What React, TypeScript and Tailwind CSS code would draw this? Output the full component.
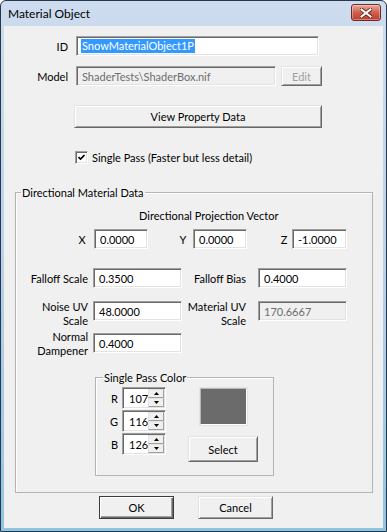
import React from "react";

function Sunken({
  className = "",
  children,
}: {
  className?: string;
  children?: React.ReactNode;
}) {
  return (
    <div
      className={
        "border border-t-[#a0a0a0] border-l-[#a0a0a0] border-b-white border-r-white shadow-[inset_1px_1px_0_#696969,inset_-1px_-1px_0_#e3e3e3] " +
        className
      }
    >
      {children}
    </div>
  );
}

function TextBox({
  value,
  w,
  disabled = false,
}: {
  value: string;
  w: string;
  disabled?: boolean;
}) {
  return (
    <Sunken
      className={
        w +
        " h-[20px] flex items-center pl-[5px] " +
        (disabled ? "bg-[#f0f0f0] text-[#6d6d6d]" : "bg-white text-black")
      }
    >
      {value}
    </Sunken>
  );
}

function Btn({
  label,
  className = "",
  disabled = false,
  isDefault = false,
}: {
  label: string;
  className?: string;
  disabled?: boolean;
  isDefault?: boolean;
}) {
  return (
    <div
      className={
        "flex items-center justify-center bg-[#f0f0f0] border " +
        (isDefault
          ? "border-[#3c3c3c] shadow-[inset_1px_1px_0_#ffffff,inset_-1px_-1px_0_#696969,inset_-2px_-2px_0_#a0a0a0] "
          : "border-t-[#e3e3e3] border-l-[#e3e3e3] border-b-[#696969] border-r-[#696969] shadow-[inset_1px_1px_0_#ffffff,inset_-1px_-1px_0_#a0a0a0] ") +
        (disabled ? "text-[#a0a0a0] " : "text-black ") +
        className
      }
    >
      {label}
    </div>
  );
}

function Spin({ v }: { v: string }) {
  return (
    <Sunken className="w-[44px] h-[22px] bg-white flex">
      <div className="flex-1 flex items-center pl-[6px]">{v}</div>
      <div className="w-[17px] flex flex-col py-[1px] pr-[1px]">
        <div className="flex-1 flex items-center justify-center bg-[#f0f0f0] border border-t-[#e3e3e3] border-l-[#e3e3e3] border-b-[#a0a0a0] border-r-[#a0a0a0]">
          <svg width="5" height="3" viewBox="0 0 5 3">
            <path d="M2.5 0 L5 3 L0 3 Z" fill="#000" />
          </svg>
        </div>
        <div className="flex-1 flex items-center justify-center bg-[#f0f0f0] border border-t-[#e3e3e3] border-l-[#e3e3e3] border-b-[#a0a0a0] border-r-[#a0a0a0]">
          <svg width="5" height="3" viewBox="0 0 5 3">
            <path d="M0 0 L5 0 L2.5 3 Z" fill="#000" />
          </svg>
        </div>
      </div>
    </Sunken>
  );
}

export default function App() {
  return (
    <div className="w-[387px] h-[532px] font-['Lato','Liberation_Sans',Arial,sans-serif] text-[11px] leading-[13px] text-black">
      <div className="w-full h-full flex flex-col border border-[#28384c] rounded-t-[6px] bg-gradient-to-b from-[#cddcee] via-[#b9d1ea] to-[#8fc4e0] px-[3px] pb-[3px]">
        {/* Title bar */}
        <div className="h-[25px] flex items-center justify-between pl-[4px] pr-[2px]">
          <span className="text-[12px] leading-[15px] text-black">Material Object</span>
          <div className="w-[30px] h-[17px] -mt-[2px] rounded-[3px] border border-[#6e2a22] bg-gradient-to-b from-[#e6a89a] via-[#d0604e] to-[#c0392b] shadow-[inset_0_0_0_1px_rgba(255,255,255,0.35)] flex items-center justify-center">
            <svg width="12" height="10" viewBox="0 0 12 10">
              <path
                d="M1.5 1.5 L10.5 8.5 M10.5 1.5 L1.5 8.5"
                stroke="#5a1e16"
                strokeWidth="3.6"
                strokeLinecap="square"
              />
              <path
                d="M1.5 1.5 L10.5 8.5 M10.5 1.5 L1.5 8.5"
                stroke="#ffffff"
                strokeWidth="2"
                strokeLinecap="square"
              />
            </svg>
          </div>
        </div>

        {/* Client area */}
        <div className="flex-1 bg-[#f0f0f0] flex flex-col">
          {/* ID */}
          <div className="mt-[10px] flex items-center">
            <div className="w-[64px] text-right">ID</div>
            <Sunken className="ml-[8px] w-[243px] h-[20px] bg-white flex items-center pl-[4px]">
              <span className="bg-[#3399ff] text-white px-[1px] leading-[14px]">
                SnowMaterialObject1P
              </span>
            </Sunken>
          </div>

          {/* Model */}
          <div className="mt-[10px] flex items-center">
            <div className="w-[64px] text-right">Model</div>
            <div className="ml-[8px]">
              <TextBox value="ShaderTests\ShaderBox.nif" w="w-[200px]" disabled />
            </div>
            <Btn label="Edit" disabled className="ml-[5px] w-[41px] h-[20px]" />
          </div>

          {/* View Property Data */}
          <div className="mt-[19px] flex">
            <Btn label="View Property Data" className="ml-[70px] w-[248px] h-[23px]" />
          </div>

          {/* Checkbox */}
          <div className="mt-[23px] flex items-center h-[13px]">
            <Sunken className="ml-[71px] w-[13px] h-[13px] bg-white flex items-center justify-center">
              <svg width="7" height="7" viewBox="0 0 7 7">
                <path d="M0.5 3 L2.5 5 L6.5 1" stroke="#000" strokeWidth="1.6" fill="none" />
              </svg>
            </Sunken>
            <span className="ml-[4px]">Single Pass (Faster but less detail)</span>
          </div>

          {/* Directional Material Data group */}
          <fieldset className="mt-[22px] ml-[11px] w-[358px] h-[307px] border border-[#b4b4b4] shadow-[inset_1px_1px_0_#ffffff]">
            <legend className="ml-[5px] px-[1px]">Directional Material Data</legend>

            <div className="mt-[10px] pl-[123px]">Directional Projection Vector</div>

            {/* XYZ */}
            <div className="mt-[7px] flex items-center">
              <div className="ml-[62px] w-[8px] text-center">X</div>
              <div className="ml-[8px]">
                <TextBox value="0.0000" w="w-[54px]" />
              </div>
              <div className="ml-[31px] w-[8px] text-center">Y</div>
              <div className="ml-[6px]">
                <TextBox value="0.0000" w="w-[54px]" />
              </div>
              <div className="ml-[33px] w-[8px] text-center">Z</div>
              <div className="ml-[4px]">
                <TextBox value="-1.0000" w="w-[55px]" />
              </div>
            </div>

            {/* Falloff */}
            <div className="mt-[19px] flex items-center">
              <div className="w-[72px] text-right">Falloff Scale</div>
              <div className="ml-[5px]">
                <TextBox value="0.3500" w="w-[89px]" />
              </div>
              <div className="w-[64px] text-right">Falloff Bias</div>
              <div className="ml-[12px]">
                <TextBox value="0.4000" w="w-[89px]" />
              </div>
            </div>

            {/* Noise UV */}
            <div className="mt-[13px] flex items-start">
              <div className="w-[72px] text-right leading-[14px] -mt-[1px]">
                Noise UV
                <br />
                Scale
              </div>
              <div className="ml-[5px]">
                <TextBox value="48.0000" w="w-[89px]" />
              </div>
              <div className="w-[64px] text-right leading-[14px] -mt-[1px]">
                Material UV
                <br />
                Scale
              </div>
              <div className="ml-[12px]">
                <TextBox value="170.6667" w="w-[89px]" disabled />
              </div>
            </div>

            {/* Normal Dampener */}
            <div className="mt-[2px] flex items-start">
              <div className="w-[72px] text-right leading-[14px]">
                Normal
                <br />
                Dampener
              </div>
              <div className="ml-[5px] mt-[3px]">
                <TextBox value="0.4000" w="w-[89px]" />
              </div>
            </div>

            {/* Single Pass Color */}
            <fieldset className="mt-[13px] ml-[79px] w-[179px] h-[105px] border border-[#b4b4b4] shadow-[inset_1px_1px_0_#ffffff]">
              <legend className="ml-[7px] px-[1px]">Single Pass Color</legend>
              <div className="mt-[3px] flex">
                <div className="flex flex-col gap-[1px]">
                  <div className="flex items-center">
                    <div className="w-[22px] text-right">R</div>
                    <div className="ml-[4px]">
                      <Spin v="107" />
                    </div>
                  </div>
                  <div className="flex items-center">
                    <div className="w-[22px] text-right">G</div>
                    <div className="ml-[4px]">
                      <Spin v="116" />
                    </div>
                  </div>
                  <div className="flex items-center">
                    <div className="w-[22px] text-right">B</div>
                    <div className="ml-[4px]">
                      <Spin v="126" />
                    </div>
                  </div>
                </div>
                <div className="ml-[22px] w-[70px] flex flex-col items-center">
                  <div className="mt-[1px] w-[47px] h-[37px] bg-[#6b6b6b] border border-t-[#b8b8b8] border-l-[#b8b8b8] border-b-white border-r-white shadow-[0_0_0_1px_#e3e3e3]" />
                  <Btn label="Select" className="mt-[11px] w-[70px] h-[26px]" />
                </div>
              </div>
            </fieldset>
          </fieldset>

          {/* OK / Cancel */}
          <div className="mt-[3px] flex">
            <Btn label="OK" isDefault className="ml-[95px] w-[75px] h-[23px]" />
            <Btn label="Cancel" className="ml-[24px] w-[75px] h-[23px]" />
          </div>
        </div>
      </div>
    </div>
  );
}
